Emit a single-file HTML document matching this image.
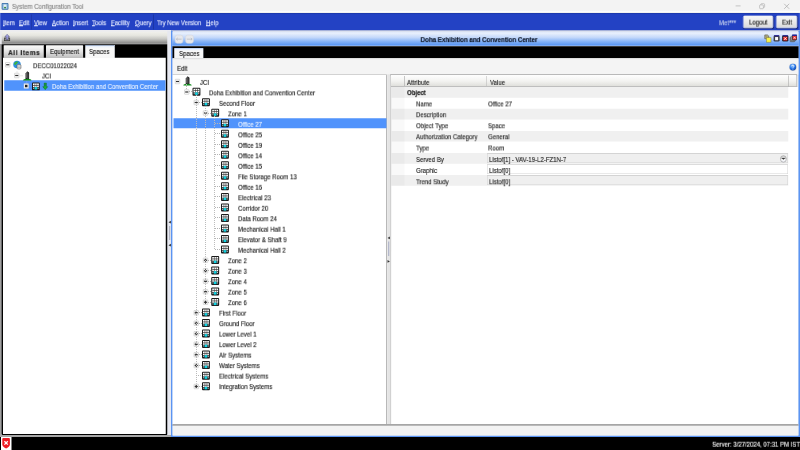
<!DOCTYPE html>
<html><head><meta charset="utf-8"><title>System Configuration Tool</title>
<style>
html,body{margin:0;padding:0;}
body{width:800px;height:450px;overflow:hidden;position:relative;background:#e4e6ee;font-family:"Liberation Sans",sans-serif;font-size:6.1px;color:#1c1c1c;line-height:1;}
div,span,svg{position:absolute;box-sizing:border-box;}
.ic{overflow:visible;}
#root{left:0;top:0;width:3200px;height:1800px;overflow:hidden;transform:scale(.25);transform-origin:0 0;}
#txt{left:0;top:0;width:800px;height:450px;overflow:hidden;}
.t{white-space:nowrap;line-height:9px;height:9px;-webkit-text-stroke:.16px currentColor;will-change:transform;}
u{text-decoration-thickness:.6px;text-underline-offset:-.3px;}
</style></head><body>
<div id="root">
<div style="left:0;top:0;width:3200px;height:52px;background:#f3f3f3"></div>
<svg class="ic" style="left:5.6px;top:12px;width:28.4px;height:27.2px" viewBox="0 0 14 14"><rect width="14" height="14" rx="2" fill="#3a6ea8"/><rect x="1.5" y="1.5" width="11" height="11" rx="1" fill="#7fb0d8"/><rect x="4" y="3" width="6" height="8" fill="#e8f0f4"/><rect x="5" y="8" width="4" height="3" fill="#3a8a4a"/></svg>
<svg class="ic" style="left:2920px;top:0;width:280px;height:50px" viewBox="0 0 70 12.5"><path d="M5.6 5.9h5" stroke="#b0b0b0" stroke-width=".7" fill="none"/><rect x="29.6" y="4.9" width="3.8" height="3.8" rx=".8" fill="none" stroke="#a8a8a8" stroke-width=".6"/><path d="M30.8 4.9v-.4a.8.8 0 0 1 .8-.8h2.2a.8.8 0 0 1 .8.8v2.2a.8.8 0 0 1-.8.8h-.4" fill="none" stroke="#a8a8a8" stroke-width=".6"/><path d="M54.2 3.8l5 5M59.2 3.8l-5 5" stroke="#a8a8a8" stroke-width=".7" fill="none"/></svg>
<div style="left:0;top:43.2px;width:3200px;height:8.8px;background:linear-gradient(#fdfdfd 60%,#e8e6e0)"></div><div style="left:0;top:52px;width:3200px;height:68px;background:linear-gradient(#1b37a6,#2342c4 6.4px)"></div><div style="left:0;top:52px;width:4px;height:68px;background:#4a66d4"></div><div style="left:3195.2px;top:52px;width:4.8px;height:68px;background:#3d5cd2"></div><div style="left:0;top:120px;width:3200px;height:5.6px;background:#f4f4f6"></div>
<div style="left:612.4px;top:58px;width:2.8px;height:60px;background:#1a329c"></div>
<div style="left:124px;top:58px;width:2.8px;height:60px;background:#1c36a4"></div>
<div style="left:2972px;top:62px;width:120.8px;height:50.8px;border-radius:7.2px;background:linear-gradient(#f7f7f7,#eaeaea 50%,#dadada);border:2.8px solid #f2f3f6;box-shadow:1.2px 2.8px 3.6px rgba(0,0,30,.55)"></div>
<div style="left:3104px;top:62px;width:85.2px;height:50.8px;border-radius:7.2px;background:linear-gradient(#f7f7f7,#eaeaea 50%,#dadada);border:2.8px solid #f2f3f6;box-shadow:1.2px 2.8px 3.6px rgba(0,0,30,.55)"></div>
<div style="left:0;top:120.8px;width:672px;height:1628px;background:#e9e9ee"></div><div style="left:0;top:176px;width:5.2px;height:1572px;background:#a0a0a0"></div>
<div style="left:7.2px;top:125.6px;width:662.8px;height:51.2px;background:linear-gradient(#f1f1ed 0%,#e6e6e0 30%,#c6c6c2 58%,#8e8e8e 88%,#a4a4a4 100%)"></div>
<svg class="ic" style="left:16px;top:134.8px;width:25.2px;height:29.6px" viewBox="0 0 13 15"><rect x="1.200" y="8.600" width="10.600" height="5.600" fill="#8a8a8a" stroke="#333" stroke-width="1.400"/><path d="M6.500 1l4.600 4.800H8.500v6H4.500v-6H1.900z" fill="#a4a4e4" stroke="#3a3a6a" stroke-width=".9"/></svg>
<div style="left:5.6px;top:176.8px;width:664.8px;height:1564px;background:#000;border-radius:0 0 6px 6px"></div>
<div style="left:12px;top:231.2px;width:650.8px;height:1504.8px;background:#fff"></div>
<div style="left:13.2px;top:179.2px;width:164px;height:52.8px;border-radius:6px 6px 0 0;background:linear-gradient(#fbfbfb,#e6e6e6 45%,#bdbdbd);border:2px solid #bdbdbd;border-bottom:0"></div>
<div style="left:182.4px;top:179.2px;width:152px;height:52.8px;border-radius:6px 6px 0 0;background:linear-gradient(#fbfbfb,#e6e6e6 45%,#bdbdbd);border:2px solid #bdbdbd;border-bottom:0"></div>
<div style="left:339.2px;top:179.2px;width:121.6px;height:53.6px;border-radius:6px 6px 0 0;background:linear-gradient(#a9c6f3 0,#e9f0fb 4.8px,#f8f8f8 12px,#f6f6f6);border:2px solid #d0d8e8;border-bottom:0"></div>
<div style="left:17.2px;top:320.8px;width:644.8px;height:42px;background:#5093fc"></div>
<svg class="ic" style="left:21.2px;top:249.2px;width:20px;height:20px" viewBox="0 0 10 10"><rect x=".5" y=".5" width="9" height="9" rx=".8" fill="#fdfdfd" stroke="#bcbcbc" stroke-width="1.100"/><rect x="1.900" y="3.800" width="6.200" height="2.400" fill="#333"/></svg>
<svg class="ic" style="left:50.8px;top:240.8px;width:38px;height:38px" viewBox="0 0 19 19"><circle cx="8.5" cy="8.5" r="7.5" fill="#2f8fe0"/><path d="M3 6c2-3 5-4 7-3 1 2-1 3-2 4s-2 3-4 2-1-2-1-3zM10 10c2-1 4 0 5 1-1 3-3 4-5 4 0-2-1-3 0-5z" fill="#3cb43c"/><rect x="8.5" y="8.5" width="8" height="9" rx="2.2" fill="#e8e8e8" stroke="#555" stroke-width="1"/><path d="M8.7 11.5h7.6M8.7 14.5h7.6" stroke="#777" stroke-width=".8"/></svg>
<div style="left:66.8px;top:282px;width:0;height:12px;border-left:2.4px dotted #aaa"></div>
<svg class="ic" style="left:57.2px;top:292px;width:20px;height:20px" viewBox="0 0 10 10"><rect x=".5" y=".5" width="9" height="9" rx=".8" fill="#fdfdfd" stroke="#bcbcbc" stroke-width="1.100"/><rect x="1.900" y="3.800" width="6.200" height="2.400" fill="#333"/></svg>
<div style="left:78px;top:302px;width:16px;height:0;border-top:2.4px dotted #999"></div>
<svg class="ic" style="left:91.2px;top:284px;width:36px;height:40px" viewBox="0 0 18 20"><path d="M5.400 16V5l3.600-4.400 3.600 3V16z" fill="#4a4a4a"/><path d="M9.600 1.200l3 2.400V16h-3z" fill="#262626"/><path d="M6.600 5v10M8.200 4v11" stroke="#8a8a8a" stroke-width=".7"/><path d="M11 5v10" stroke="#666" stroke-width=".6"/><path d="M.6 19.200c0-2.200 3-3.600 8.400-3.600s8.400 1.400 8.400 3.600z" fill="#0c8a18"/><path d="M5.400 16h3v-2z" fill="#111"/></svg>
<div style="left:106px;top:323.2px;width:0;height:12px;border-left:2.4px dotted #ccd"></div>
<svg class="ic" style="left:95.2px;top:333.6px;width:20px;height:20px" viewBox="0 0 10 10"><rect x=".5" y=".5" width="9" height="9" fill="#f4f4f4" stroke="#d8d8d8"/><rect x="2.5" y="2.5" width="5" height="5" fill="#222"/></svg>
<svg class="ic" style="left:128.4px;top:330.4px;width:31.2px;height:31.2px" viewBox="0 0 16 16"><rect width="16" height="16" rx="1.800" fill="#1a1a1a"/><rect x="2" y="2" width="12" height="7.600" fill="#fff"/><rect x="5.400" y="2" width="1.100" height="7.600" fill="#2a2a2a"/><rect x="9.500" y="2" width="1.100" height="7.600" fill="#2a2a2a"/><rect x="2" y="5.300" width="12" height="1.300" fill="#2a2a2a"/><rect x="2.300" y="10.900" width="2.300" height="2.300" fill="#c4c4c4"/><rect x="11.400" y="10.900" width="2.300" height="2.300" fill="#c4c4c4"/><rect x="5.300" y="9.400" width="5.400" height="5" fill="#12d4e4"/></svg>
<svg class="ic" style="left:170.4px;top:329.6px;width:22px;height:30.8px" viewBox="0 0 11 15"><path d="M3.2 1h4.6v3.4H3.2zM3.2 5.2h4.6v3H10.5L5.5 14.2.5 8.2h2.7z" fill="#18b038" stroke="#0a5a1a" stroke-width=".8"/></svg>
<div style="left:670px;top:120.8px;width:15.2px;height:1628px;background:#e6e8f0"></div>
<div style="left:675.6px;top:904px;width:5.6px;height:56px;background:#b4b6c4"></div>
<svg class="ic" style="left:674px;top:883.2px;width:9.6px;height:104px" viewBox="0 0 2.4 26"><path d="M0 1.400L2.400 0v2.800zM0 24.400L2.400 23v2.800z" fill="#333"/></svg>
<div style="left:683.6px;top:120.8px;width:2516.4px;height:1627.2px;background:#f4f4f4;border:7.6px solid #5b94f2;border-top:4.4px solid #8a9ad0;border-bottom-width:6.8px"></div>
<div style="left:690px;top:126.8px;width:2503.6px;height:57.2px;background:linear-gradient(#dfe9fb 0%,#e6eefc 12%,#c4d8fa 40%,#86b3f7 68%,#5f9af4 90%,#8fb6f4 100%)"></div>
<svg class="ic" style="left:699px;top:138.8px;width:34px;height:35.2px" viewBox="0 0 7.800 8"><rect x=".3" y=".3" width="7.200" height="7.400" rx="1.900" fill="#e7e8ec" stroke="#d2d6de" stroke-width=".5"/><path d="M6.300 4H1.500M2.700 2.900L1.500 4 2.700 5.100" fill="none" stroke="#b4b8c0" stroke-width=".7"/></svg>
<svg class="ic" style="left:740.8px;top:138.8px;width:34px;height:35.2px" viewBox="0 0 7.800 8"><rect x=".3" y=".3" width="7.200" height="7.400" rx="1.900" fill="#e7e8ec" stroke="#d2d6de" stroke-width=".5"/><path d="M1.500 4h4.800M5.100 2.900L6.300 4 5.100 5.100" fill="none" stroke="#b4b8c0" stroke-width=".7"/></svg>
<svg class="ic" style="left:3056px;top:135.2px;width:136px;height:36px" viewBox="0 0 34 9">
<path d="M.8 1.200h2.600l1.300 1v2.800H.8z" fill="#c8c4a0" stroke="#4a4630" stroke-width=".6"/><path d="M1.400 2.400h2.400M1.400 3.400h2.400" stroke="#5a5636" stroke-width=".4"/><rect x="2.500" y="4" width="4.500" height="4.400" fill="#f6f24a" stroke="#8a8430" stroke-width=".5"/>
<rect x="9.600" y="1.500" width="6" height="6.300" rx="1.400" fill="#3a3a44"/><rect x="10" y="1.400" width="5.200" height="1" rx=".4" fill="#2424a8"/><rect x="11.100" y="3.300" width="3" height="3.200" fill="#fff"/>
<rect x="18.100" y="1.500" width="6.300" height="6.300" rx="1.300" fill="#26262e"/><rect x="18.600" y="1.400" width="5.300" height="1" rx=".4" fill="#2424a8"/><rect x="19.300" y="2.900" width="3.900" height="3.900" rx=".5" fill="#f01818"/><path d="M20 3.600l2.500 2.500M22.500 3.600L20 6.100" stroke="#fff" stroke-width=".9"/>
<rect x="26" y="3.400" width="4.800" height="4.600" rx=".7" fill="#8c8c8c" stroke="#444" stroke-width=".5"/><rect x="27" y="2.400" width="4.800" height="4.600" rx=".7" fill="#a8a8a8" stroke="#444" stroke-width=".5"/><rect x="28" y="1" width="5" height="5.400" rx=".8" fill="#30303a"/><rect x="28.200" y=".8" width="4.600" height="1.300" fill="#2424a8"/><rect x="28.700" y="2.300" width="3.700" height="3.500" rx=".4" fill="#f02828"/><path d="M29.500 3l2.100 2.100M31.600 3l-2.100 2.100" stroke="#fff" stroke-width=".7"/>
</svg>
<div style="left:690px;top:184.8px;width:2503.6px;height:48px;background:#000"></div>
<div style="left:695.2px;top:189.6px;width:119.6px;height:44.8px;border-radius:6.4px 6.4px 0 0;background:linear-gradient(#a9c6f3 0,#e9f0fb 4.8px,#f8f8f8 12px,#f4f4f4);border:2px solid #d0d8e8;border-bottom:0"></div>
<div style="left:690px;top:232.8px;width:2503.6px;height:64.8px;background:linear-gradient(#e9e9e9,#f4f4f4 8.8px)"></div>
<svg class="ic" style="left:3157.2px;top:254.4px;width:28.8px;height:28.8px" viewBox="0 0 14 14"><defs><radialGradient id="hg" cx=".4" cy=".3" r=".8"><stop offset="0" stop-color="#8ec4ff"/><stop offset=".5" stop-color="#2a78e8"/><stop offset="1" stop-color="#0a3a98"/></radialGradient></defs><circle cx="7" cy="7" r="7.700" fill="#dadada"/><circle cx="7" cy="7" r="6.500" fill="url(#hg)"/><path d="M4.8 5.2c0-1.4 1-2.2 2.3-2.2s2.3.8 2.3 2c0 1.6-2.1 1.6-2.1 3.2" fill="none" stroke="#fff" stroke-width="1.5"/><circle cx="7.2" cy="10.6" r=".95" fill="#fff"/></svg>
<div style="left:690px;top:296.8px;width:859.2px;height:1404px;background:#fff;border:4px solid #a2a2a2;border-left:0;border-radius:0 4.8px 0 0"></div>
<div style="left:1548.8px;top:297.2px;width:12px;height:1400px;background:#e4e4e4"></div>
<div style="left:1551.6px;top:966px;width:5.6px;height:58px;background:#b4b8cc"></div>
<svg class="ic" style="left:1550px;top:946.4px;width:9.6px;height:105.6px" viewBox="0 0 2.4 26.4"><path d="M0 1.400L2.400 0v2.800zM2.400 24.900L0 23.500v2.800z" fill="#333"/></svg>
<div style="left:694.4px;top:472.52px;width:851.2px;height:40px;background:#5093fc"></div>
<svg class="ic" style="left:700px;top:315.88px;width:20px;height:20px" viewBox="0 0 10 10"><rect x=".5" y=".5" width="9" height="9" rx=".8" fill="#fdfdfd" stroke="#bcbcbc" stroke-width="1.100"/><rect x="1.900" y="3.800" width="6.200" height="2.400" fill="#333"/></svg>
<svg class="ic" style="left:732px;top:303.88px;width:36px;height:40px" viewBox="0 0 18 20"><path d="M5.400 16V5l3.600-4.400 3.600 3V16z" fill="#4a4a4a"/><path d="M9.600 1.200l3 2.400V16h-3z" fill="#262626"/><path d="M6.600 5v10M8.200 4v11" stroke="#8a8a8a" stroke-width=".7"/><path d="M11 5v10" stroke="#666" stroke-width=".6"/><path d="M.6 19.200c0-2.200 3-3.600 8.400-3.600s8.400 1.400 8.400 3.600z" fill="#0c8a18"/><path d="M5.400 16h3v-2z" fill="#111"/></svg>
<svg class="ic" style="left:737.2px;top:357.94px;width:20px;height:20px" viewBox="0 0 10 10"><rect x=".5" y=".5" width="9" height="9" rx=".8" fill="#fdfdfd" stroke="#bcbcbc" stroke-width="1.100"/><rect x="1.900" y="3.800" width="6.200" height="2.400" fill="#333"/></svg>
<svg class="ic" style="left:770px;top:350.92px;width:31.6px;height:31.6px" viewBox="0 0 16 16"><rect width="16" height="16" rx="1.800" fill="#1a1a1a"/><rect x="2" y="2" width="12" height="7.600" fill="#fff"/><rect x="5.400" y="2" width="1.100" height="7.600" fill="#2a2a2a"/><rect x="9.500" y="2" width="1.100" height="7.600" fill="#2a2a2a"/><rect x="2" y="5.300" width="12" height="1.300" fill="#2a2a2a"/><rect x="2.300" y="10.900" width="2.300" height="2.300" fill="#c4c4c4"/><rect x="11.400" y="10.900" width="2.300" height="2.300" fill="#c4c4c4"/><rect x="5.300" y="9.400" width="5.400" height="5" fill="#12d4e4"/></svg>
<svg class="ic" style="left:775.2px;top:400px;width:20px;height:20px" viewBox="0 0 10 10"><rect x=".5" y=".5" width="9" height="9" rx=".8" fill="#fdfdfd" stroke="#bcbcbc" stroke-width="1.100"/><rect x="1.900" y="3.800" width="6.200" height="2.400" fill="#333"/></svg>
<svg class="ic" style="left:808px;top:393px;width:31.6px;height:31.6px" viewBox="0 0 16 16"><rect width="16" height="16" rx="1.800" fill="#1a1a1a"/><rect x="2" y="2" width="12" height="7.600" fill="#fff"/><rect x="5.400" y="2" width="1.100" height="7.600" fill="#2a2a2a"/><rect x="9.500" y="2" width="1.100" height="7.600" fill="#2a2a2a"/><rect x="2" y="5.300" width="12" height="1.300" fill="#2a2a2a"/><rect x="2.300" y="10.900" width="2.300" height="2.300" fill="#c4c4c4"/><rect x="11.400" y="10.900" width="2.300" height="2.300" fill="#c4c4c4"/><rect x="5.300" y="9.400" width="5.400" height="5" fill="#12d4e4"/></svg>
<svg class="ic" style="left:811.6px;top:442.06px;width:20px;height:20px" viewBox="0 0 10 10"><rect x=".5" y=".5" width="9" height="9" rx=".8" fill="#fdfdfd" stroke="#bcbcbc" stroke-width="1.100"/><rect x="1.900" y="3.800" width="6.200" height="2.400" fill="#333"/></svg>
<svg class="ic" style="left:844.8px;top:435.08px;width:31.6px;height:31.6px" viewBox="0 0 16 16"><rect width="16" height="16" rx="1.800" fill="#1a1a1a"/><rect x="2" y="2" width="12" height="7.600" fill="#fff"/><rect x="5.400" y="2" width="1.100" height="7.600" fill="#2a2a2a"/><rect x="9.500" y="2" width="1.100" height="7.600" fill="#2a2a2a"/><rect x="2" y="5.300" width="12" height="1.300" fill="#2a2a2a"/><rect x="2.300" y="10.900" width="2.300" height="2.300" fill="#c4c4c4"/><rect x="11.400" y="10.900" width="2.300" height="2.300" fill="#c4c4c4"/><rect x="5.300" y="9.400" width="5.400" height="5" fill="#12d4e4"/></svg>
<svg class="ic" style="left:884px;top:477.12px;width:31.6px;height:31.6px" viewBox="0 0 16 16"><rect width="16" height="16" rx="1.800" fill="#1a1a1a"/><rect x="2" y="2" width="12" height="7.600" fill="#fff"/><rect x="5.400" y="2" width="1.100" height="7.600" fill="#2a2a2a"/><rect x="9.500" y="2" width="1.100" height="7.600" fill="#2a2a2a"/><rect x="2" y="5.300" width="12" height="1.300" fill="#2a2a2a"/><rect x="2.300" y="10.900" width="2.300" height="2.300" fill="#c4c4c4"/><rect x="11.400" y="10.900" width="2.300" height="2.300" fill="#c4c4c4"/><rect x="5.300" y="9.400" width="5.400" height="5" fill="#12d4e4"/></svg>
<svg class="ic" style="left:884px;top:519.2px;width:31.6px;height:31.6px" viewBox="0 0 16 16"><rect width="16" height="16" rx="1.800" fill="#1a1a1a"/><rect x="2" y="2" width="12" height="7.600" fill="#fff"/><rect x="5.400" y="2" width="1.100" height="7.600" fill="#2a2a2a"/><rect x="9.500" y="2" width="1.100" height="7.600" fill="#2a2a2a"/><rect x="2" y="5.300" width="12" height="1.300" fill="#2a2a2a"/><rect x="2.300" y="10.900" width="2.300" height="2.300" fill="#c4c4c4"/><rect x="11.400" y="10.900" width="2.300" height="2.300" fill="#c4c4c4"/><rect x="5.300" y="9.400" width="5.400" height="5" fill="#12d4e4"/></svg>
<svg class="ic" style="left:884px;top:561.24px;width:31.6px;height:31.6px" viewBox="0 0 16 16"><rect width="16" height="16" rx="1.800" fill="#1a1a1a"/><rect x="2" y="2" width="12" height="7.600" fill="#fff"/><rect x="5.400" y="2" width="1.100" height="7.600" fill="#2a2a2a"/><rect x="9.500" y="2" width="1.100" height="7.600" fill="#2a2a2a"/><rect x="2" y="5.300" width="12" height="1.300" fill="#2a2a2a"/><rect x="2.300" y="10.900" width="2.300" height="2.300" fill="#c4c4c4"/><rect x="11.400" y="10.900" width="2.300" height="2.300" fill="#c4c4c4"/><rect x="5.300" y="9.400" width="5.400" height="5" fill="#12d4e4"/></svg>
<svg class="ic" style="left:884px;top:603.28px;width:31.6px;height:31.6px" viewBox="0 0 16 16"><rect width="16" height="16" rx="1.800" fill="#1a1a1a"/><rect x="2" y="2" width="12" height="7.600" fill="#fff"/><rect x="5.400" y="2" width="1.100" height="7.600" fill="#2a2a2a"/><rect x="9.500" y="2" width="1.100" height="7.600" fill="#2a2a2a"/><rect x="2" y="5.300" width="12" height="1.300" fill="#2a2a2a"/><rect x="2.300" y="10.900" width="2.300" height="2.300" fill="#c4c4c4"/><rect x="11.400" y="10.900" width="2.300" height="2.300" fill="#c4c4c4"/><rect x="5.300" y="9.400" width="5.400" height="5" fill="#12d4e4"/></svg>
<svg class="ic" style="left:884px;top:645.36px;width:31.6px;height:31.6px" viewBox="0 0 16 16"><rect width="16" height="16" rx="1.800" fill="#1a1a1a"/><rect x="2" y="2" width="12" height="7.600" fill="#fff"/><rect x="5.400" y="2" width="1.100" height="7.600" fill="#2a2a2a"/><rect x="9.500" y="2" width="1.100" height="7.600" fill="#2a2a2a"/><rect x="2" y="5.300" width="12" height="1.300" fill="#2a2a2a"/><rect x="2.300" y="10.900" width="2.300" height="2.300" fill="#c4c4c4"/><rect x="11.400" y="10.900" width="2.300" height="2.300" fill="#c4c4c4"/><rect x="5.300" y="9.400" width="5.400" height="5" fill="#12d4e4"/></svg>
<svg class="ic" style="left:884px;top:687.44px;width:31.6px;height:31.6px" viewBox="0 0 16 16"><rect width="16" height="16" rx="1.800" fill="#1a1a1a"/><rect x="2" y="2" width="12" height="7.600" fill="#fff"/><rect x="5.400" y="2" width="1.100" height="7.600" fill="#2a2a2a"/><rect x="9.500" y="2" width="1.100" height="7.600" fill="#2a2a2a"/><rect x="2" y="5.300" width="12" height="1.300" fill="#2a2a2a"/><rect x="2.300" y="10.900" width="2.300" height="2.300" fill="#c4c4c4"/><rect x="11.400" y="10.900" width="2.300" height="2.300" fill="#c4c4c4"/><rect x="5.300" y="9.400" width="5.400" height="5" fill="#12d4e4"/></svg>
<svg class="ic" style="left:884px;top:729.48px;width:31.6px;height:31.6px" viewBox="0 0 16 16"><rect width="16" height="16" rx="1.800" fill="#1a1a1a"/><rect x="2" y="2" width="12" height="7.600" fill="#fff"/><rect x="5.400" y="2" width="1.100" height="7.600" fill="#2a2a2a"/><rect x="9.500" y="2" width="1.100" height="7.600" fill="#2a2a2a"/><rect x="2" y="5.300" width="12" height="1.300" fill="#2a2a2a"/><rect x="2.300" y="10.900" width="2.300" height="2.300" fill="#c4c4c4"/><rect x="11.400" y="10.900" width="2.300" height="2.300" fill="#c4c4c4"/><rect x="5.300" y="9.400" width="5.400" height="5" fill="#12d4e4"/></svg>
<svg class="ic" style="left:884px;top:771.52px;width:31.6px;height:31.6px" viewBox="0 0 16 16"><rect width="16" height="16" rx="1.800" fill="#1a1a1a"/><rect x="2" y="2" width="12" height="7.600" fill="#fff"/><rect x="5.400" y="2" width="1.100" height="7.600" fill="#2a2a2a"/><rect x="9.500" y="2" width="1.100" height="7.600" fill="#2a2a2a"/><rect x="2" y="5.300" width="12" height="1.300" fill="#2a2a2a"/><rect x="2.300" y="10.900" width="2.300" height="2.300" fill="#c4c4c4"/><rect x="11.400" y="10.900" width="2.300" height="2.300" fill="#c4c4c4"/><rect x="5.300" y="9.400" width="5.400" height="5" fill="#12d4e4"/></svg>
<svg class="ic" style="left:884px;top:813.6px;width:31.6px;height:31.6px" viewBox="0 0 16 16"><rect width="16" height="16" rx="1.800" fill="#1a1a1a"/><rect x="2" y="2" width="12" height="7.600" fill="#fff"/><rect x="5.400" y="2" width="1.100" height="7.600" fill="#2a2a2a"/><rect x="9.500" y="2" width="1.100" height="7.600" fill="#2a2a2a"/><rect x="2" y="5.300" width="12" height="1.300" fill="#2a2a2a"/><rect x="2.300" y="10.900" width="2.300" height="2.300" fill="#c4c4c4"/><rect x="11.400" y="10.900" width="2.300" height="2.300" fill="#c4c4c4"/><rect x="5.300" y="9.400" width="5.400" height="5" fill="#12d4e4"/></svg>
<svg class="ic" style="left:884px;top:855.64px;width:31.6px;height:31.6px" viewBox="0 0 16 16"><rect width="16" height="16" rx="1.800" fill="#1a1a1a"/><rect x="2" y="2" width="12" height="7.600" fill="#fff"/><rect x="5.400" y="2" width="1.100" height="7.600" fill="#2a2a2a"/><rect x="9.500" y="2" width="1.100" height="7.600" fill="#2a2a2a"/><rect x="2" y="5.300" width="12" height="1.300" fill="#2a2a2a"/><rect x="2.300" y="10.900" width="2.300" height="2.300" fill="#c4c4c4"/><rect x="11.400" y="10.900" width="2.300" height="2.300" fill="#c4c4c4"/><rect x="5.300" y="9.400" width="5.400" height="5" fill="#12d4e4"/></svg>
<svg class="ic" style="left:884px;top:897.72px;width:31.6px;height:31.6px" viewBox="0 0 16 16"><rect width="16" height="16" rx="1.800" fill="#1a1a1a"/><rect x="2" y="2" width="12" height="7.600" fill="#fff"/><rect x="5.400" y="2" width="1.100" height="7.600" fill="#2a2a2a"/><rect x="9.500" y="2" width="1.100" height="7.600" fill="#2a2a2a"/><rect x="2" y="5.300" width="12" height="1.300" fill="#2a2a2a"/><rect x="2.300" y="10.900" width="2.300" height="2.300" fill="#c4c4c4"/><rect x="11.400" y="10.900" width="2.300" height="2.300" fill="#c4c4c4"/><rect x="5.300" y="9.400" width="5.400" height="5" fill="#12d4e4"/></svg>
<svg class="ic" style="left:884px;top:939.8px;width:31.6px;height:31.6px" viewBox="0 0 16 16"><rect width="16" height="16" rx="1.800" fill="#1a1a1a"/><rect x="2" y="2" width="12" height="7.600" fill="#fff"/><rect x="5.400" y="2" width="1.100" height="7.600" fill="#2a2a2a"/><rect x="9.500" y="2" width="1.100" height="7.600" fill="#2a2a2a"/><rect x="2" y="5.300" width="12" height="1.300" fill="#2a2a2a"/><rect x="2.300" y="10.900" width="2.300" height="2.300" fill="#c4c4c4"/><rect x="11.400" y="10.900" width="2.300" height="2.300" fill="#c4c4c4"/><rect x="5.300" y="9.400" width="5.400" height="5" fill="#12d4e4"/></svg>
<svg class="ic" style="left:884px;top:981.84px;width:31.6px;height:31.6px" viewBox="0 0 16 16"><rect width="16" height="16" rx="1.800" fill="#1a1a1a"/><rect x="2" y="2" width="12" height="7.600" fill="#fff"/><rect x="5.400" y="2" width="1.100" height="7.600" fill="#2a2a2a"/><rect x="9.500" y="2" width="1.100" height="7.600" fill="#2a2a2a"/><rect x="2" y="5.300" width="12" height="1.300" fill="#2a2a2a"/><rect x="2.300" y="10.900" width="2.300" height="2.300" fill="#c4c4c4"/><rect x="11.400" y="10.900" width="2.300" height="2.300" fill="#c4c4c4"/><rect x="5.300" y="9.400" width="5.400" height="5" fill="#12d4e4"/></svg>
<svg class="ic" style="left:811.6px;top:1030.9px;width:20px;height:20px" viewBox="0 0 10 10"><rect x=".5" y=".5" width="9" height="9" rx=".8" fill="#fdfdfd" stroke="#bcbcbc" stroke-width="1.100"/><rect x="1.900" y="3.800" width="6.200" height="2.400" fill="#333"/><rect x="3.800" y="1.900" width="2.400" height="6.200" fill="#333"/></svg>
<svg class="ic" style="left:844.8px;top:1023.88px;width:31.6px;height:31.6px" viewBox="0 0 16 16"><rect width="16" height="16" rx="1.800" fill="#1a1a1a"/><rect x="2" y="2" width="12" height="7.600" fill="#fff"/><rect x="5.400" y="2" width="1.100" height="7.600" fill="#2a2a2a"/><rect x="9.500" y="2" width="1.100" height="7.600" fill="#2a2a2a"/><rect x="2" y="5.300" width="12" height="1.300" fill="#2a2a2a"/><rect x="2.300" y="10.900" width="2.300" height="2.300" fill="#c4c4c4"/><rect x="11.400" y="10.900" width="2.300" height="2.300" fill="#c4c4c4"/><rect x="5.300" y="9.400" width="5.400" height="5" fill="#12d4e4"/></svg>
<svg class="ic" style="left:811.6px;top:1072.96px;width:20px;height:20px" viewBox="0 0 10 10"><rect x=".5" y=".5" width="9" height="9" rx=".8" fill="#fdfdfd" stroke="#bcbcbc" stroke-width="1.100"/><rect x="1.900" y="3.800" width="6.200" height="2.400" fill="#333"/><rect x="3.800" y="1.900" width="2.400" height="6.200" fill="#333"/></svg>
<svg class="ic" style="left:844.8px;top:1065.96px;width:31.6px;height:31.6px" viewBox="0 0 16 16"><rect width="16" height="16" rx="1.800" fill="#1a1a1a"/><rect x="2" y="2" width="12" height="7.600" fill="#fff"/><rect x="5.400" y="2" width="1.100" height="7.600" fill="#2a2a2a"/><rect x="9.500" y="2" width="1.100" height="7.600" fill="#2a2a2a"/><rect x="2" y="5.300" width="12" height="1.300" fill="#2a2a2a"/><rect x="2.300" y="10.900" width="2.300" height="2.300" fill="#c4c4c4"/><rect x="11.400" y="10.900" width="2.300" height="2.300" fill="#c4c4c4"/><rect x="5.300" y="9.400" width="5.400" height="5" fill="#12d4e4"/></svg>
<svg class="ic" style="left:811.6px;top:1115.02px;width:20px;height:20px" viewBox="0 0 10 10"><rect x=".5" y=".5" width="9" height="9" rx=".8" fill="#fdfdfd" stroke="#bcbcbc" stroke-width="1.100"/><rect x="1.900" y="3.800" width="6.200" height="2.400" fill="#333"/><rect x="3.800" y="1.900" width="2.400" height="6.200" fill="#333"/></svg>
<svg class="ic" style="left:844.8px;top:1108px;width:31.6px;height:31.6px" viewBox="0 0 16 16"><rect width="16" height="16" rx="1.800" fill="#1a1a1a"/><rect x="2" y="2" width="12" height="7.600" fill="#fff"/><rect x="5.400" y="2" width="1.100" height="7.600" fill="#2a2a2a"/><rect x="9.500" y="2" width="1.100" height="7.600" fill="#2a2a2a"/><rect x="2" y="5.300" width="12" height="1.300" fill="#2a2a2a"/><rect x="2.300" y="10.900" width="2.300" height="2.300" fill="#c4c4c4"/><rect x="11.400" y="10.900" width="2.300" height="2.300" fill="#c4c4c4"/><rect x="5.300" y="9.400" width="5.400" height="5" fill="#12d4e4"/></svg>
<svg class="ic" style="left:811.6px;top:1157.08px;width:20px;height:20px" viewBox="0 0 10 10"><rect x=".5" y=".5" width="9" height="9" rx=".8" fill="#fdfdfd" stroke="#bcbcbc" stroke-width="1.100"/><rect x="1.900" y="3.800" width="6.200" height="2.400" fill="#333"/><rect x="3.800" y="1.900" width="2.400" height="6.200" fill="#333"/></svg>
<svg class="ic" style="left:844.8px;top:1150.08px;width:31.6px;height:31.6px" viewBox="0 0 16 16"><rect width="16" height="16" rx="1.800" fill="#1a1a1a"/><rect x="2" y="2" width="12" height="7.600" fill="#fff"/><rect x="5.400" y="2" width="1.100" height="7.600" fill="#2a2a2a"/><rect x="9.500" y="2" width="1.100" height="7.600" fill="#2a2a2a"/><rect x="2" y="5.300" width="12" height="1.300" fill="#2a2a2a"/><rect x="2.300" y="10.900" width="2.300" height="2.300" fill="#c4c4c4"/><rect x="11.400" y="10.900" width="2.300" height="2.300" fill="#c4c4c4"/><rect x="5.300" y="9.400" width="5.400" height="5" fill="#12d4e4"/></svg>
<svg class="ic" style="left:811.6px;top:1199.14px;width:20px;height:20px" viewBox="0 0 10 10"><rect x=".5" y=".5" width="9" height="9" rx=".8" fill="#fdfdfd" stroke="#bcbcbc" stroke-width="1.100"/><rect x="1.900" y="3.800" width="6.200" height="2.400" fill="#333"/><rect x="3.800" y="1.900" width="2.400" height="6.200" fill="#333"/></svg>
<svg class="ic" style="left:844.8px;top:1192.12px;width:31.6px;height:31.6px" viewBox="0 0 16 16"><rect width="16" height="16" rx="1.800" fill="#1a1a1a"/><rect x="2" y="2" width="12" height="7.600" fill="#fff"/><rect x="5.400" y="2" width="1.100" height="7.600" fill="#2a2a2a"/><rect x="9.500" y="2" width="1.100" height="7.600" fill="#2a2a2a"/><rect x="2" y="5.300" width="12" height="1.300" fill="#2a2a2a"/><rect x="2.300" y="10.900" width="2.300" height="2.300" fill="#c4c4c4"/><rect x="11.400" y="10.900" width="2.300" height="2.300" fill="#c4c4c4"/><rect x="5.300" y="9.400" width="5.400" height="5" fill="#12d4e4"/></svg>
<svg class="ic" style="left:775.2px;top:1241.2px;width:20px;height:20px" viewBox="0 0 10 10"><rect x=".5" y=".5" width="9" height="9" rx=".8" fill="#fdfdfd" stroke="#bcbcbc" stroke-width="1.100"/><rect x="1.900" y="3.800" width="6.200" height="2.400" fill="#333"/><rect x="3.800" y="1.900" width="2.400" height="6.200" fill="#333"/></svg>
<svg class="ic" style="left:808px;top:1234.2px;width:31.6px;height:31.6px" viewBox="0 0 16 16"><rect width="16" height="16" rx="1.800" fill="#1a1a1a"/><rect x="2" y="2" width="12" height="7.600" fill="#fff"/><rect x="5.400" y="2" width="1.100" height="7.600" fill="#2a2a2a"/><rect x="9.500" y="2" width="1.100" height="7.600" fill="#2a2a2a"/><rect x="2" y="5.300" width="12" height="1.300" fill="#2a2a2a"/><rect x="2.300" y="10.900" width="2.300" height="2.300" fill="#c4c4c4"/><rect x="11.400" y="10.900" width="2.300" height="2.300" fill="#c4c4c4"/><rect x="5.300" y="9.400" width="5.400" height="5" fill="#12d4e4"/></svg>
<svg class="ic" style="left:775.2px;top:1283.26px;width:20px;height:20px" viewBox="0 0 10 10"><rect x=".5" y=".5" width="9" height="9" rx=".8" fill="#fdfdfd" stroke="#bcbcbc" stroke-width="1.100"/><rect x="1.900" y="3.800" width="6.200" height="2.400" fill="#333"/><rect x="3.800" y="1.900" width="2.400" height="6.200" fill="#333"/></svg>
<svg class="ic" style="left:808px;top:1276.28px;width:31.6px;height:31.6px" viewBox="0 0 16 16"><rect width="16" height="16" rx="1.800" fill="#1a1a1a"/><rect x="2" y="2" width="12" height="7.600" fill="#fff"/><rect x="5.400" y="2" width="1.100" height="7.600" fill="#2a2a2a"/><rect x="9.500" y="2" width="1.100" height="7.600" fill="#2a2a2a"/><rect x="2" y="5.300" width="12" height="1.300" fill="#2a2a2a"/><rect x="2.300" y="10.900" width="2.300" height="2.300" fill="#c4c4c4"/><rect x="11.400" y="10.900" width="2.300" height="2.300" fill="#c4c4c4"/><rect x="5.300" y="9.400" width="5.400" height="5" fill="#12d4e4"/></svg>
<svg class="ic" style="left:775.2px;top:1325.32px;width:20px;height:20px" viewBox="0 0 10 10"><rect x=".5" y=".5" width="9" height="9" rx=".8" fill="#fdfdfd" stroke="#bcbcbc" stroke-width="1.100"/><rect x="1.900" y="3.800" width="6.200" height="2.400" fill="#333"/><rect x="3.800" y="1.900" width="2.400" height="6.200" fill="#333"/></svg>
<svg class="ic" style="left:808px;top:1318.32px;width:31.6px;height:31.6px" viewBox="0 0 16 16"><rect width="16" height="16" rx="1.800" fill="#1a1a1a"/><rect x="2" y="2" width="12" height="7.600" fill="#fff"/><rect x="5.400" y="2" width="1.100" height="7.600" fill="#2a2a2a"/><rect x="9.500" y="2" width="1.100" height="7.600" fill="#2a2a2a"/><rect x="2" y="5.300" width="12" height="1.300" fill="#2a2a2a"/><rect x="2.300" y="10.900" width="2.300" height="2.300" fill="#c4c4c4"/><rect x="11.400" y="10.900" width="2.300" height="2.300" fill="#c4c4c4"/><rect x="5.300" y="9.400" width="5.400" height="5" fill="#12d4e4"/></svg>
<svg class="ic" style="left:775.2px;top:1367.38px;width:20px;height:20px" viewBox="0 0 10 10"><rect x=".5" y=".5" width="9" height="9" rx=".8" fill="#fdfdfd" stroke="#bcbcbc" stroke-width="1.100"/><rect x="1.900" y="3.800" width="6.200" height="2.400" fill="#333"/><rect x="3.800" y="1.900" width="2.400" height="6.200" fill="#333"/></svg>
<svg class="ic" style="left:808px;top:1360.4px;width:31.6px;height:31.6px" viewBox="0 0 16 16"><rect width="16" height="16" rx="1.800" fill="#1a1a1a"/><rect x="2" y="2" width="12" height="7.600" fill="#fff"/><rect x="5.400" y="2" width="1.100" height="7.600" fill="#2a2a2a"/><rect x="9.500" y="2" width="1.100" height="7.600" fill="#2a2a2a"/><rect x="2" y="5.300" width="12" height="1.300" fill="#2a2a2a"/><rect x="2.300" y="10.900" width="2.300" height="2.300" fill="#c4c4c4"/><rect x="11.400" y="10.900" width="2.300" height="2.300" fill="#c4c4c4"/><rect x="5.300" y="9.400" width="5.400" height="5" fill="#12d4e4"/></svg>
<svg class="ic" style="left:775.2px;top:1409.44px;width:20px;height:20px" viewBox="0 0 10 10"><rect x=".5" y=".5" width="9" height="9" rx=".8" fill="#fdfdfd" stroke="#bcbcbc" stroke-width="1.100"/><rect x="1.900" y="3.800" width="6.200" height="2.400" fill="#333"/><rect x="3.800" y="1.900" width="2.400" height="6.200" fill="#333"/></svg>
<svg class="ic" style="left:808px;top:1402.44px;width:31.6px;height:31.6px" viewBox="0 0 16 16"><rect width="16" height="16" rx="1.800" fill="#1a1a1a"/><rect x="2" y="2" width="12" height="7.600" fill="#fff"/><rect x="5.400" y="2" width="1.100" height="7.600" fill="#2a2a2a"/><rect x="9.500" y="2" width="1.100" height="7.600" fill="#2a2a2a"/><rect x="2" y="5.300" width="12" height="1.300" fill="#2a2a2a"/><rect x="2.300" y="10.900" width="2.300" height="2.300" fill="#c4c4c4"/><rect x="11.400" y="10.900" width="2.300" height="2.300" fill="#c4c4c4"/><rect x="5.300" y="9.400" width="5.400" height="5" fill="#12d4e4"/></svg>
<svg class="ic" style="left:775.2px;top:1451.5px;width:20px;height:20px" viewBox="0 0 10 10"><rect x=".5" y=".5" width="9" height="9" rx=".8" fill="#fdfdfd" stroke="#bcbcbc" stroke-width="1.100"/><rect x="1.900" y="3.800" width="6.200" height="2.400" fill="#333"/><rect x="3.800" y="1.900" width="2.400" height="6.200" fill="#333"/></svg>
<svg class="ic" style="left:808px;top:1444.48px;width:31.6px;height:31.6px" viewBox="0 0 16 16"><rect width="16" height="16" rx="1.800" fill="#1a1a1a"/><rect x="2" y="2" width="12" height="7.600" fill="#fff"/><rect x="5.400" y="2" width="1.100" height="7.600" fill="#2a2a2a"/><rect x="9.500" y="2" width="1.100" height="7.600" fill="#2a2a2a"/><rect x="2" y="5.300" width="12" height="1.300" fill="#2a2a2a"/><rect x="2.300" y="10.900" width="2.300" height="2.300" fill="#c4c4c4"/><rect x="11.400" y="10.900" width="2.300" height="2.300" fill="#c4c4c4"/><rect x="5.300" y="9.400" width="5.400" height="5" fill="#12d4e4"/></svg>
<svg class="ic" style="left:808px;top:1486.56px;width:31.6px;height:31.6px" viewBox="0 0 16 16"><rect width="16" height="16" rx="1.800" fill="#1a1a1a"/><rect x="2" y="2" width="12" height="7.600" fill="#fff"/><rect x="5.400" y="2" width="1.100" height="7.600" fill="#2a2a2a"/><rect x="9.500" y="2" width="1.100" height="7.600" fill="#2a2a2a"/><rect x="2" y="5.300" width="12" height="1.300" fill="#2a2a2a"/><rect x="2.300" y="10.900" width="2.300" height="2.300" fill="#c4c4c4"/><rect x="11.400" y="10.900" width="2.300" height="2.300" fill="#c4c4c4"/><rect x="5.300" y="9.400" width="5.400" height="5" fill="#12d4e4"/></svg>
<svg class="ic" style="left:775.2px;top:1535.62px;width:20px;height:20px" viewBox="0 0 10 10"><rect x=".5" y=".5" width="9" height="9" rx=".8" fill="#fdfdfd" stroke="#bcbcbc" stroke-width="1.100"/><rect x="1.900" y="3.800" width="6.200" height="2.400" fill="#333"/><rect x="3.800" y="1.900" width="2.400" height="6.200" fill="#333"/></svg>
<svg class="ic" style="left:808px;top:1528.6px;width:31.6px;height:31.6px" viewBox="0 0 16 16"><rect width="16" height="16" rx="1.800" fill="#1a1a1a"/><rect x="2" y="2" width="12" height="7.600" fill="#fff"/><rect x="5.400" y="2" width="1.100" height="7.600" fill="#2a2a2a"/><rect x="9.500" y="2" width="1.100" height="7.600" fill="#2a2a2a"/><rect x="2" y="5.300" width="12" height="1.300" fill="#2a2a2a"/><rect x="2.300" y="10.900" width="2.300" height="2.300" fill="#c4c4c4"/><rect x="11.400" y="10.900" width="2.300" height="2.300" fill="#c4c4c4"/><rect x="5.300" y="9.400" width="5.400" height="5" fill="#12d4e4"/></svg>
<svg class="ic" style="left:0;top:0;width:3200px;height:1800px" viewBox="0 0 800 450"><g fill="none" stroke-width="1" stroke-dasharray="1 1"><path d="M186.50 84.00V89.28" stroke="#bcbcbc"/><path d="M196.50 95.00V383.70" stroke="#bcbcbc"/><path d="M205.50 106.00V299.58" stroke="#bcbcbc"/><path d="M214.50 116.00V249.21" stroke="#bcbcbc"/><path d="M189.00 91.50H192.50" stroke="#b4b4b4"/><path d="M199.00 102.50H202.00" stroke="#b4b4b4"/><path d="M208.00 113.50H211.20" stroke="#b4b4b4"/><path d="M215.00 123.50H221.00" stroke="#b4b4b4"/><path d="M215.00 133.50H221.00" stroke="#b4b4b4"/><path d="M215.00 144.50H221.00" stroke="#b4b4b4"/><path d="M215.00 154.50H221.00" stroke="#b4b4b4"/><path d="M215.00 165.50H221.00" stroke="#b4b4b4"/><path d="M215.00 175.50H221.00" stroke="#b4b4b4"/><path d="M215.00 186.50H221.00" stroke="#b4b4b4"/><path d="M215.00 196.50H221.00" stroke="#b4b4b4"/><path d="M215.00 207.50H221.00" stroke="#b4b4b4"/><path d="M215.00 217.50H221.00" stroke="#b4b4b4"/><path d="M215.00 228.50H221.00" stroke="#b4b4b4"/><path d="M215.00 238.50H221.00" stroke="#b4b4b4"/><path d="M215.00 249.50H221.00" stroke="#b4b4b4"/><path d="M208.00 260.50H211.20" stroke="#b4b4b4"/><path d="M208.00 270.50H211.20" stroke="#b4b4b4"/><path d="M208.00 281.50H211.20" stroke="#b4b4b4"/><path d="M208.00 291.50H211.20" stroke="#b4b4b4"/><path d="M208.00 302.50H211.20" stroke="#b4b4b4"/><path d="M199.00 312.50H202.00" stroke="#b4b4b4"/><path d="M199.00 323.50H202.00" stroke="#b4b4b4"/><path d="M199.00 333.50H202.00" stroke="#b4b4b4"/><path d="M199.00 344.50H202.00" stroke="#b4b4b4"/><path d="M199.00 354.50H202.00" stroke="#b4b4b4"/><path d="M199.00 365.50H202.00" stroke="#b4b4b4"/><path d="M196.00 375.50H202.00" stroke="#b4b4b4"/><path d="M199.00 386.50H202.00" stroke="#b4b4b4"/></g></svg>
<div style="left:1561.2px;top:297.2px;width:1632px;height:1404px;background:#fff;border-left:4px solid #a2a2a2;border-radius:4.8px 0 0 0"></div><div style="left:1561.2px;top:296.8px;width:1627.6px;height:4px;background:#a2a2a2"></div>
<div style="left:1564.4px;top:300.4px;width:1624.4px;height:46.4px;background:linear-gradient(#fefefe,#f3f3f1 55%,#e0e0dc);border-bottom:3.6px solid #a8a8a8;border-right:3.2px solid #a0a0a0"></div>
<div style="left:1617.2px;top:304px;width:2.4px;height:40px;background:#b4b4b4"></div>
<div style="left:1944.8px;top:304px;width:2.4px;height:40px;background:#b4b4b4"></div>
<div style="left:3153.6px;top:301.6px;width:2.8px;height:44px;background:#a0a0a0"></div>
<div style="left:1564.4px;top:348px;width:1588.4px;height:43.2px;background:#f0f0f0"></div>
<div style="left:1564.4px;top:435.2px;width:1588.4px;height:43.2px;background:#f0f0f0"></div>
<div style="left:1564.4px;top:523.6px;width:1588.4px;height:42.8px;background:#f0f0f0"></div>
<div style="left:1564.4px;top:612px;width:1588.4px;height:43.2px;background:#f0f0f0"></div>
<div style="left:1947.6px;top:613.2px;width:1204px;height:38.4px;background:#efefef;border:2.8px solid #d2d2d2;border-top-color:#b8b8b8"></div>
<div style="left:1947.6px;top:658px;width:1204px;height:38.4px;background:#fff;border:2.8px solid #d2d2d2;border-top-color:#b8b8b8"></div>
<div style="left:1564.4px;top:700px;width:1588.4px;height:42.8px;background:#f0f0f0"></div>
<div style="left:1947.6px;top:702px;width:1204px;height:38.4px;background:#efefef;border:2.8px solid #d2d2d2;border-top-color:#b8b8b8"></div>
<div style="left:1564.4px;top:348px;width:53.2px;height:394.8px;background:rgba(0,0,0,.022)"></div>
<svg class="ic" style="left:3119.6px;top:620.8px;width:27.2px;height:29.6px" viewBox="0 0 13.6 14.8"><defs><linearGradient id="dg" x1="0" y1="0" x2="0" y2="1"><stop offset="0" stop-color="#d8d8d8"/><stop offset=".45" stop-color="#c8c8c8"/><stop offset=".55" stop-color="#fafafa"/><stop offset="1" stop-color="#eef0f8"/></linearGradient></defs><ellipse cx="6.800" cy="7.400" rx="5.900" ry="6.500" fill="url(#dg)" stroke="#9c9c9c" stroke-width="1.300"/><path d="M3.200 5.600h7.200L6.800 9z" fill="#333"/></svg>
<div style="left:690px;top:1702.4px;width:2503.6px;height:39.6px;background:#f3f3f3"></div>
<div style="left:690px;top:1696px;width:2503.6px;height:7.2px;background:#a6a6a6"></div>
<div style="left:0;top:1748px;width:3200px;height:52px;background:#000"></div>
<div style="left:0;top:1740.4px;width:684px;height:7.6px;background:#a8a8a8"></div>
<div style="left:3.6px;top:1748px;width:42.8px;height:52px;background:#fff"></div>
<svg class="ic" style="left:8px;top:1752.4px;width:32.8px;height:43.6px" viewBox="0 0 16.4 21.8"><path d="M.6 .8L2.400 .2h11.600l1.800 .6v11.600c0 4.400-3.600 6.600-7.600 8.800C4.200 19 .6 16.800 .6 12.400z" fill="#ee1c24"/><path d="M4.800 6.400l6.800 6.800M11.600 6.400l-6.800 6.800" stroke="#fff" stroke-width="2.600"/></svg>
</div>
<div id="txt">
<div class="t" style="top:1px;font-size:6.9px;color:#8a8a8a;left:11.90px;transform:translateY(0.90px) scaleX(0.89);transform-origin:0 0;">System Configuration Tool</div>
<div class="t" style="top:18px;font-size:7.6px;color:#e6ebff;left:2.50px;transform:translateY(0.25px) scaleX(0.795);transform-origin:0 0;"><u>I</u>tem</div>
<div class="t" style="top:18px;font-size:7.6px;color:#e6ebff;left:19.00px;transform:translateY(0.25px) scaleX(0.795);transform-origin:0 0;"><u>E</u>dit</div>
<div class="t" style="top:18px;font-size:7.6px;color:#e6ebff;left:34.00px;transform:translateY(0.25px) scaleX(0.795);transform-origin:0 0;"><u>V</u>iew</div>
<div class="t" style="top:18px;font-size:7.6px;color:#e6ebff;left:51.50px;transform:translateY(0.25px) scaleX(0.795);transform-origin:0 0;"><u>A</u>ction</div>
<div class="t" style="top:18px;font-size:7.6px;color:#e6ebff;left:73.00px;transform:translateY(0.25px) scaleX(0.795);transform-origin:0 0;"><u>I</u>nsert</div>
<div class="t" style="top:18px;font-size:7.6px;color:#e6ebff;left:92.00px;transform:translateY(0.25px) scaleX(0.795);transform-origin:0 0;"><u>T</u>ools</div>
<div class="t" style="top:18px;font-size:7.6px;color:#e6ebff;left:111.00px;transform:translateY(0.25px) scaleX(0.795);transform-origin:0 0;"><u>F</u>acility</div>
<div class="t" style="top:18px;font-size:7.6px;color:#e6ebff;left:135.00px;transform:translateY(0.25px) scaleX(0.795);transform-origin:0 0;"><u>Q</u>uery</div>
<div class="t" style="top:18px;font-size:7.6px;color:#e6ebff;left:156.50px;transform:translateY(0.25px) scaleX(0.795);transform-origin:0 0;">Try New Version</div>
<div class="t" style="top:18px;font-size:7.6px;color:#e6ebff;left:205.50px;transform:translateY(0.25px) scaleX(0.795);transform-origin:0 0;"><u>H</u>elp</div>
<div class="t" style="top:18px;font-size:7.6px;color:#c4ceee;left:719.00px;transform:translateY(0.25px) scaleX(0.795);transform-origin:0 0;">Met***</div>
<div class="t" style="top:17px;font-size:7.6px;color:#222;left:748.90px;transform:translateY(0.60px) scaleX(0.795);transform-origin:0 0;">Logout</div>
<div class="t" style="top:17px;font-size:7.6px;color:#222;left:782.10px;transform:translateY(0.60px) scaleX(0.795);transform-origin:0 0;">Exit</div>
<div class="t" style="top:48px;font-size:7.6px;color:#202020;font-weight:bold;left:7.50px;transform:translateY(0.10px) scaleX(0.87);transform-origin:0 0;letter-spacing:.6px;">All Items</div>
<div class="t" style="top:47px;font-size:7.6px;color:#202020;left:49.50px;transform:scaleX(0.795);transform-origin:0 0;">Equipment</div>
<div class="t" style="top:47px;font-size:7.6px;color:#202020;left:89.30px;transform:scaleX(0.81);transform-origin:0 0;">Spaces</div>
<div class="t" style="top:61px;font-size:7.6px;color:#262626;left:33.00px;transform:translateY(0.25px) scaleX(0.795);transform-origin:0 0;">DECC01022024</div>
<div class="t" style="top:71px;font-size:7.6px;color:#262626;left:42.30px;transform:translateY(0.50px) scaleX(0.795);transform-origin:0 0;">JCI</div>
<div class="t" style="top:82px;font-size:7.6px;color:#e4eeff;left:52.20px;transform:scaleX(0.795);transform-origin:0 0;">Doha Exhibition and Convention Center</div>
<div class="t" style="top:35px;font-size:7.6px;color:#101828;font-weight:bold;left:172.00px;width:614.00px;text-align:center;transform:translateY(0.10px) scaleX(0.814);transform-origin:50% 0;">Doha Exhibition and Convention Center</div>
<div class="t" style="top:49px;font-size:7.6px;color:#202020;left:178.70px;transform:scaleX(0.81);transform-origin:0 0;">Spaces</div>
<div class="t" style="top:63px;font-size:7.6px;color:#202020;left:177.00px;transform:translateY(0.85px) scaleX(0.795);transform-origin:0 0;">Edit</div>
<div class="t" style="top:77px;font-size:7.6px;color:#222;left:200.00px;transform:translateY(0.88px) scaleX(0.795);transform-origin:0 0;">JCI</div>
<div class="t" style="top:88px;font-size:7.6px;color:#222;left:209.30px;transform:translateY(0.37px) scaleX(0.795);transform-origin:0 0;">Doha Exhibition and Convention Center</div>
<div class="t" style="top:98px;font-size:7.6px;color:#222;left:218.90px;transform:translateY(0.86px) scaleX(0.795);transform-origin:0 0;">Second Floor</div>
<div class="t" style="top:109px;font-size:7.6px;color:#222;left:227.90px;transform:translateY(0.35px) scaleX(0.795);transform-origin:0 0;">Zone 1</div>
<div class="t" style="top:119px;font-size:7.6px;color:#e4eeff;left:238.00px;transform:translateY(0.84px) scaleX(0.795);transform-origin:0 0;">Office 27</div>
<div class="t" style="top:130px;font-size:7.6px;color:#222;left:238.00px;transform:translateY(0.33px) scaleX(0.795);transform-origin:0 0;">Office 25</div>
<div class="t" style="top:140px;font-size:7.6px;color:#222;left:238.00px;transform:translateY(0.82px) scaleX(0.795);transform-origin:0 0;">Office 19</div>
<div class="t" style="top:151px;font-size:7.6px;color:#222;left:238.00px;transform:translateY(0.31px) scaleX(0.795);transform-origin:0 0;">Office 14</div>
<div class="t" style="top:161px;font-size:7.6px;color:#222;left:238.00px;transform:translateY(0.80px) scaleX(0.795);transform-origin:0 0;">Office 15</div>
<div class="t" style="top:172px;font-size:7.6px;color:#222;left:238.00px;transform:translateY(0.29px) scaleX(0.795);transform-origin:0 0;">File Storage Room 13</div>
<div class="t" style="top:182px;font-size:7.6px;color:#222;left:238.00px;transform:translateY(0.78px) scaleX(0.795);transform-origin:0 0;">Office 16</div>
<div class="t" style="top:193px;font-size:7.6px;color:#222;left:238.00px;transform:translateY(0.27px) scaleX(0.795);transform-origin:0 0;">Electrical 23</div>
<div class="t" style="top:203px;font-size:7.6px;color:#222;left:238.00px;transform:translateY(0.76px) scaleX(0.795);transform-origin:0 0;">Corridor 20</div>
<div class="t" style="top:214px;font-size:7.6px;color:#222;left:238.00px;transform:translateY(0.25px) scaleX(0.795);transform-origin:0 0;">Data Room 24</div>
<div class="t" style="top:224px;font-size:7.6px;color:#222;left:238.00px;transform:translateY(0.74px) scaleX(0.795);transform-origin:0 0;">Mechanical Hall 1</div>
<div class="t" style="top:235px;font-size:7.6px;color:#222;left:238.00px;transform:translateY(0.23px) scaleX(0.795);transform-origin:0 0;">Elevator &amp; Shaft 9</div>
<div class="t" style="top:245px;font-size:7.6px;color:#222;left:238.00px;transform:translateY(0.72px) scaleX(0.795);transform-origin:0 0;">Mechanical Hall 2</div>
<div class="t" style="top:256px;font-size:7.6px;color:#222;left:227.90px;transform:translateY(0.21px) scaleX(0.795);transform-origin:0 0;">Zone 2</div>
<div class="t" style="top:266px;font-size:7.6px;color:#222;left:227.90px;transform:translateY(0.70px) scaleX(0.795);transform-origin:0 0;">Zone 3</div>
<div class="t" style="top:277px;font-size:7.6px;color:#222;left:227.90px;transform:translateY(0.19px) scaleX(0.795);transform-origin:0 0;">Zone 4</div>
<div class="t" style="top:287px;font-size:7.6px;color:#222;left:227.90px;transform:translateY(0.68px) scaleX(0.795);transform-origin:0 0;">Zone 5</div>
<div class="t" style="top:298px;font-size:7.6px;color:#222;left:227.90px;transform:translateY(0.17px) scaleX(0.795);transform-origin:0 0;">Zone 6</div>
<div class="t" style="top:308px;font-size:7.6px;color:#222;left:218.90px;transform:translateY(0.66px) scaleX(0.795);transform-origin:0 0;">First Floor</div>
<div class="t" style="top:319px;font-size:7.6px;color:#222;left:218.90px;transform:translateY(0.15px) scaleX(0.795);transform-origin:0 0;">Ground Floor</div>
<div class="t" style="top:329px;font-size:7.6px;color:#222;left:218.90px;transform:translateY(0.64px) scaleX(0.795);transform-origin:0 0;">Lower Level 1</div>
<div class="t" style="top:340px;font-size:7.6px;color:#222;left:218.90px;transform:translateY(0.13px) scaleX(0.795);transform-origin:0 0;">Lower Level 2</div>
<div class="t" style="top:350px;font-size:7.6px;color:#222;left:218.90px;transform:translateY(0.62px) scaleX(0.795);transform-origin:0 0;">Air Systems</div>
<div class="t" style="top:361px;font-size:7.6px;color:#222;left:218.90px;transform:translateY(0.11px) scaleX(0.795);transform-origin:0 0;">Water Systems</div>
<div class="t" style="top:371px;font-size:7.6px;color:#222;left:218.90px;transform:translateY(0.60px) scaleX(0.795);transform-origin:0 0;">Electrical Systems</div>
<div class="t" style="top:382px;font-size:7.6px;color:#222;left:218.90px;transform:translateY(0.09px) scaleX(0.795);transform-origin:0 0;">Integration Systems</div>
<div class="t" style="top:77px;font-size:7.6px;color:#262626;left:407.20px;transform:translateY(0.90px) scaleX(0.795);transform-origin:0 0;">Attribute</div>
<div class="t" style="top:77px;font-size:7.6px;color:#262626;left:489.80px;transform:translateY(0.90px) scaleX(0.795);transform-origin:0 0;">Value</div>
<div class="t" style="top:88px;font-size:7.6px;color:#111;font-weight:bold;left:407.20px;transform:translateY(0.10px) scaleX(0.795);transform-origin:0 0;">Object</div>
<div class="t" style="top:99px;font-size:7.6px;color:#262626;left:415.70px;transform:translateY(0.40px) scaleX(0.795);transform-origin:0 0;">Name</div>
<div class="t" style="top:99px;font-size:7.6px;color:#262626;left:487.70px;transform:translateY(0.40px) scaleX(0.795);transform-origin:0 0;">Office 27</div>
<div class="t" style="top:110px;font-size:7.6px;color:#262626;left:415.70px;transform:translateY(0.25px) scaleX(0.795);transform-origin:0 0;">Description</div>
<div class="t" style="top:121px;font-size:7.6px;color:#262626;left:415.70px;transform:translateY(0.25px) scaleX(0.795);transform-origin:0 0;">Object Type</div>
<div class="t" style="top:121px;font-size:7.6px;color:#262626;left:487.70px;transform:translateY(0.25px) scaleX(0.795);transform-origin:0 0;">Space</div>
<div class="t" style="top:132px;font-size:7.6px;color:#262626;left:415.70px;transform:translateY(0.25px) scaleX(0.795);transform-origin:0 0;">Authorization Category</div>
<div class="t" style="top:132px;font-size:7.6px;color:#262626;left:487.70px;transform:translateY(0.25px) scaleX(0.795);transform-origin:0 0;">General</div>
<div class="t" style="top:143px;font-size:7.6px;color:#262626;left:415.70px;transform:translateY(0.50px) scaleX(0.795);transform-origin:0 0;">Type</div>
<div class="t" style="top:143px;font-size:7.6px;color:#262626;left:487.70px;transform:translateY(0.50px) scaleX(0.795);transform-origin:0 0;">Room</div>
<div class="t" style="top:155px;font-size:7.6px;color:#262626;left:415.70px;transform:scaleX(0.795);transform-origin:0 0;">Served By</div>
<div class="t" style="top:155px;font-size:7.6px;color:#262626;left:488.60px;transform:scaleX(0.795);transform-origin:0 0;">Listof[1] - VAV-19-L2-FZ1N-7</div>
<div class="t" style="top:166px;font-size:7.6px;color:#262626;left:415.70px;transform:scaleX(0.795);transform-origin:0 0;">Graphic</div>
<div class="t" style="top:166px;font-size:7.6px;color:#262626;left:488.60px;transform:scaleX(0.795);transform-origin:0 0;">Listof[0]</div>
<div class="t" style="top:177px;font-size:7.6px;color:#262626;left:415.70px;transform:translateY(0.25px) scaleX(0.795);transform-origin:0 0;">Trend Study</div>
<div class="t" style="top:177px;font-size:7.6px;color:#262626;left:488.60px;transform:translateY(0.25px) scaleX(0.795);transform-origin:0 0;">Listof[0]</div>
<div class="t" style="top:439px;font-size:7.6px;color:#f0f0f0;right:0.30px;transform:translateY(0.75px) scaleX(0.79);transform-origin:100% 0;">Server: 3/27/2024, 07:31 PM IST</div>
</div>
</body></html>
